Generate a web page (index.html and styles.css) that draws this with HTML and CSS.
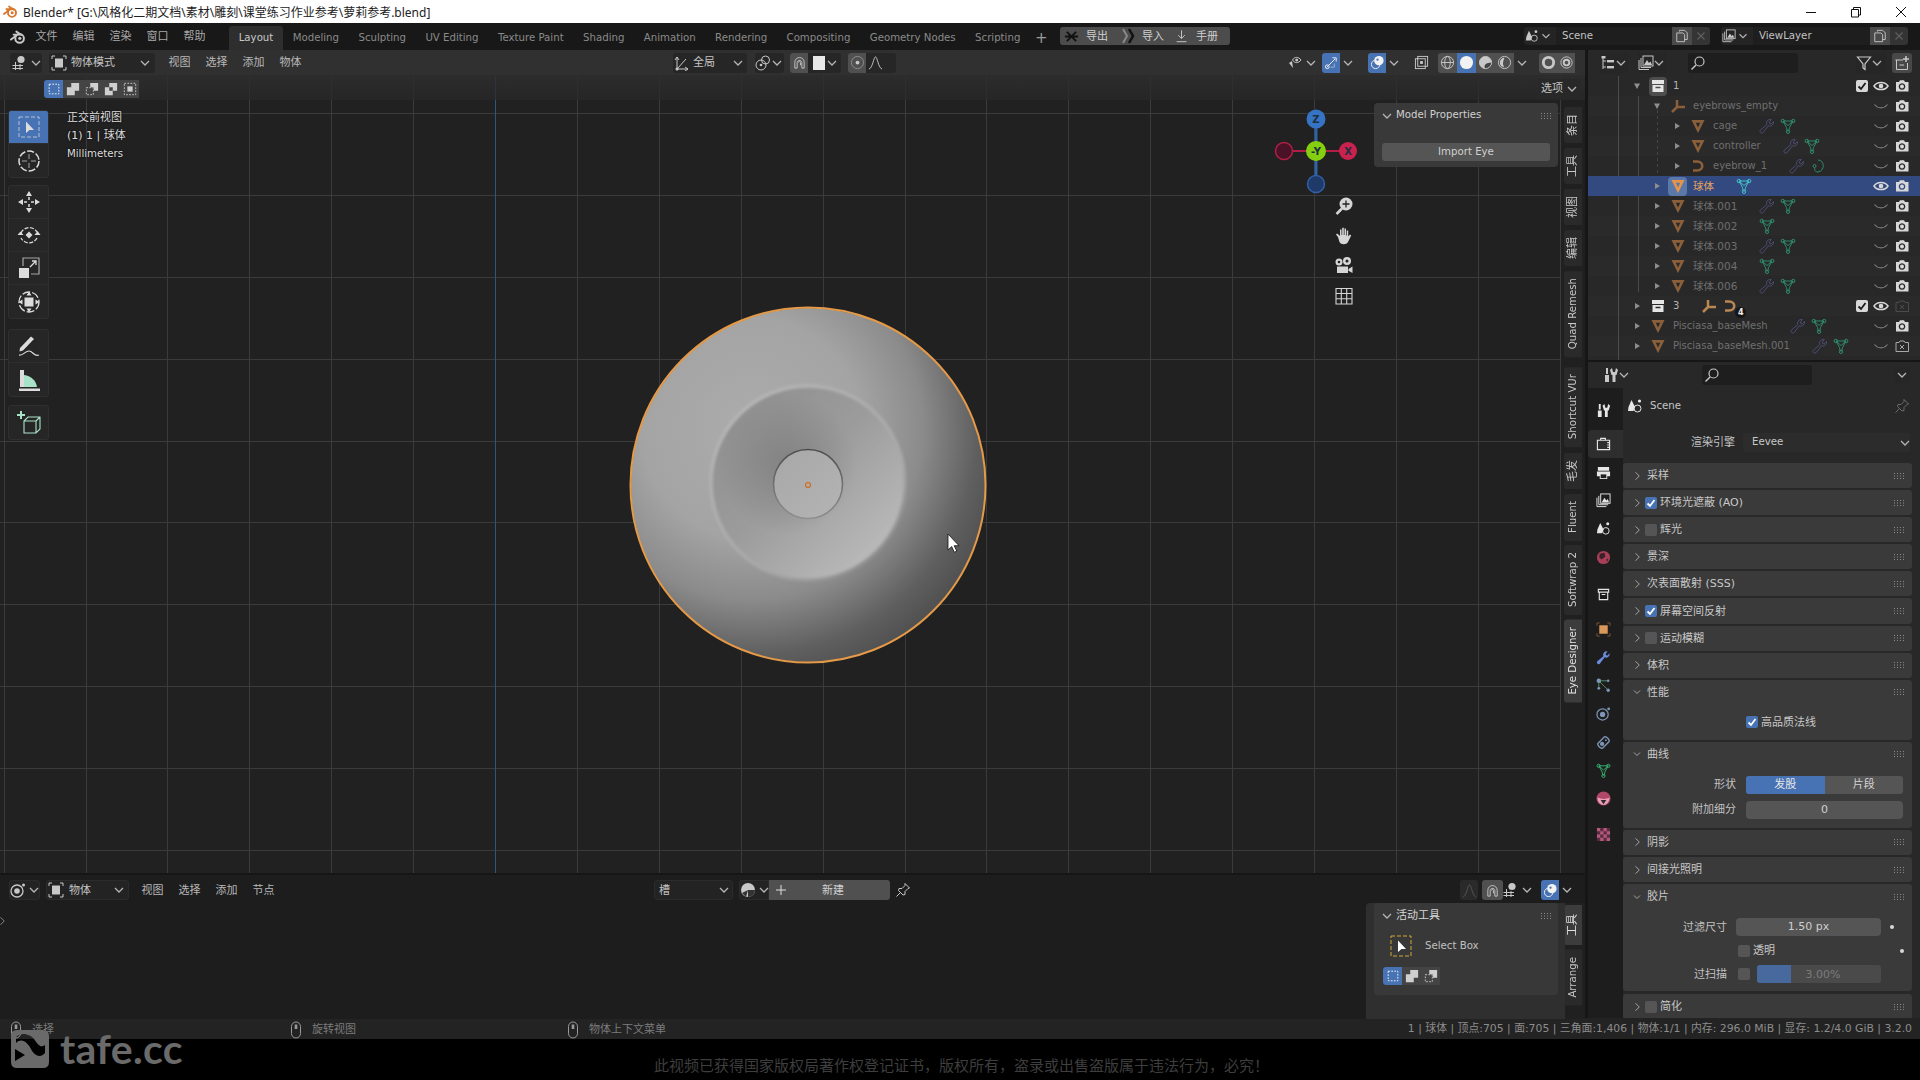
FILE: index.html
```html
<!DOCTYPE html>
<html lang="zh-CN">
<head>
<meta charset="utf-8">
<title>Blender</title>
<link rel="stylesheet" href="styles.css">
</head>
<body>
<svg class="defs" xmlns="http://www.w3.org/2000/svg">
  <symbol id="logo" viewBox="0 0 16 16"><circle cx="9.6" cy="9.4" r="4.3" fill="none" stroke="currentColor" stroke-width="2"/><circle cx="9.8" cy="9.3" r="1.6" fill="currentColor"/><path d="M1 10.6 6.6 6.3M3.6 5.6H9.6M6.4 2.6 11.4 6" fill="none" stroke="currentColor" stroke-width="1.9" stroke-linecap="round"/></symbol>
  <symbol id="view3d" viewBox="0 0 16 16"><path d="M0.5 10.5H11M3.5 7V15M8 9V15M0.5 13.5H11" stroke="currentColor" fill="none"/><circle cx="9" cy="4.5" r="3.6" fill="currentColor"/></symbol>
  <symbol id="modebox" viewBox="0 0 16 16"><path d="M1 4V1H4M12 1H15V4M15 12V15H12M4 15H1V12" stroke="currentColor" fill="none"/><rect x="4" y="3.5" width="8" height="9" fill="currentColor"/></symbol>
  <symbol id="chevd" viewBox="0 0 16 16"><path d="M4 6 8 10 12 6" fill="none" stroke="currentColor" stroke-width="1.3"/></symbol>
  <symbol id="chevr" viewBox="0 0 16 16"><path d="M6 3 11 8 6 13" fill="none" stroke="currentColor" stroke-width="1.3"/></symbol>
  <symbol id="trir" viewBox="0 0 10 10"><path d="M3 2 8 5 3 8Z" fill="currentColor"/></symbol>
  <symbol id="trid" viewBox="0 0 10 10"><path d="M2 2.500H8L5 8Z" fill="currentColor"/></symbol>
  <symbol id="grip" viewBox="0 0 12 6"><g fill="currentColor"><rect x="0" y="0" width="1" height="1"/><rect x="3" y="0" width="1" height="1"/><rect x="6" y="0" width="1" height="1"/><rect x="9" y="0" width="1" height="1"/><rect x="0" y="2.500" width="1" height="1"/><rect x="3" y="2.500" width="1" height="1"/><rect x="6" y="2.500" width="1" height="1"/><rect x="9" y="2.500" width="1" height="1"/><rect x="0" y="5" width="1" height="1"/><rect x="3" y="5" width="1" height="1"/><rect x="6" y="5" width="1" height="1"/><rect x="9" y="5" width="1" height="1"/></g></symbol>
  <symbol id="check" viewBox="0 0 12 12"><path d="M2.500 6.500 5 9 9.500 3" fill="none" stroke="currentColor" stroke-width="1.800"/></symbol>
  <symbol id="obj" viewBox="0 0 16 16"><path fill-rule="evenodd" d="M1.500 2H14.500L8 15ZM5.800 4.800 8 9.500 10.200 4.800Z" fill="currentColor"/></symbol>
  <symbol id="mesh" viewBox="0 0 16 16"><path d="M3 3H13L9.500 9.500 8.800 13H7.200L6.500 9.500ZM3 3 8 7.500 13 3" fill="none" stroke="currentColor"/><circle cx="2.800" cy="3" r="1.700" fill="none" stroke="currentColor"/><circle cx="13.200" cy="3" r="1.700" fill="none" stroke="currentColor"/><circle cx="8" cy="13.800" r="1.700" fill="none" stroke="currentColor"/></symbol>
  <symbol id="wrench" viewBox="0 0 16 16"><path d="M14.500 3.500a3.800 3.800 0 0 1-5.200 4.300L4.200 14.500a1.800 1.800 0 0 1-2.800-2.400l6.400-5.500A3.800 3.800 0 0 1 12.300 1.500L10.300 4l.4 1.500 1.500.4Z" fill="currentColor"/></symbol>
  <symbol id="wrenchl" viewBox="0 0 16 16"><path d="M14.500 3.500a3.800 3.800 0 0 1-5.200 4.300L4.200 14.500a1.800 1.800 0 0 1-2.800-2.400l6.400-5.500A3.800 3.800 0 0 1 12.300 1.500L10.300 4l.4 1.500 1.500.4Z" fill="none" stroke="currentColor"/></symbol>
  <symbol id="curve" viewBox="0 0 16 16"><path d="M3 3.500H7C14 3.500 14 12.500 7 12.500H3" fill="none" stroke="currentColor" stroke-width="2.600"/></symbol>
  <symbol id="curvel" viewBox="0 0 16 16"><path d="M8 2C15 2 15 13 8 14 5 14 4 12 5 10" fill="none" stroke="currentColor"/><circle cx="4.500" cy="8" r="1.500" fill="none" stroke="currentColor"/></symbol>
  <symbol id="empty" viewBox="0 0 16 16"><path d="M7 2V9M7 9 2 14M7 9H15" fill="none" stroke="currentColor" stroke-width="2.500"/></symbol>
  <symbol id="coll" viewBox="0 0 16 16"><path fill-rule="evenodd" d="M2 2H14V6H2ZM2.500 7H13.500V14H2.500ZM5.500 8.700V10.200H10.500V8.700Z" fill="currentColor"/></symbol>
  <symbol id="colll" viewBox="0 0 16 16"><path d="M2.500 2.500H13.500V5.500H2.500ZM3.500 5.500V13.500H12.500V5.500M6 8H10" fill="none" stroke="currentColor" stroke-width="1.200"/></symbol>
  <symbol id="eye" viewBox="0 0 16 16"><path d="M1 8C4 3.300 12 3.300 15 8 12 12.700 4 12.700 1 8Z" fill="none" stroke="currentColor" stroke-width="1.500"/><circle cx="8" cy="8" r="2.300" fill="currentColor"/></symbol>
  <symbol id="eyeoff" viewBox="0 0 16 16"><path d="M1.500 6.500C5 11 11 11 14.500 6.500" fill="none" stroke="currentColor" stroke-width="1.100"/></symbol>
  <symbol id="cam" viewBox="0 0 16 16"><path fill-rule="evenodd" d="M2 4H5L6 2.300H10L11 4H14.500V13.500H2ZM8 5.200a3.300 3.300 0 1 0 .01 0Z" fill="currentColor"/><circle cx="8" cy="8.500" r="2" fill="currentColor"/></symbol>
  <symbol id="camoff" viewBox="0 0 16 16"><path d="M2 4.500H5L6 3H10L11 4.500H14.500V13.500H2ZM6 7 10 11M10 7 6 11" fill="none" stroke="currentColor"/></symbol>
  <symbol id="outl" viewBox="0 0 16 16"><path d="M3 2V14M3 6H6M3 12H6" stroke="currentColor" fill="none"/><rect x="1.500" y="1" width="4" height="2.500" fill="currentColor"/><rect x="7" y="5" width="7" height="2.400" fill="currentColor"/><rect x="7" y="11" width="7" height="2.400" fill="currentColor"/></symbol>
  <symbol id="layer" viewBox="0 0 16 16"><path d="M1 5V14.500H11M3 3V12.500H13" fill="none" stroke="currentColor"/><rect x="5" y="1" width="10" height="10" fill="none" stroke="currentColor"/><path d="M6 10 9 5 11 8 12.500 6.500 14 10Z" fill="currentColor"/></symbol>
  <symbol id="search" viewBox="0 0 16 16"><circle cx="9.500" cy="6.500" r="4.500" fill="none" stroke="currentColor" stroke-width="1.200"/><path d="M6 10 1.500 14.500" stroke="currentColor" stroke-width="1.400"/></symbol>
  <symbol id="filter" viewBox="0 0 16 16"><path d="M1.500 2H14.500L9 9V14.500L7 13V9Z" fill="none" stroke="currentColor" stroke-width="1.200"/></symbol>
  <symbol id="newcoll" viewBox="0 0 16 16"><path d="M1.500 5H9M2.500 5V14.500H13.500V8M5.500 10H10" fill="none" stroke="currentColor"/><path d="M12 1V7M9 4H15" stroke="currentColor" stroke-width="1.500"/></symbol>
  <symbol id="scene" viewBox="0 0 16 16"><path d="M4.500 2 8 9 6.500 13H1L1.500 9Z" fill="currentColor"/><circle cx="10.500" cy="10.500" r="3.500" fill="none" stroke="currentColor"/><circle cx="12.500" cy="3" r="1.600" fill="currentColor"/></symbol>
  <symbol id="copy" viewBox="0 0 16 16"><path d="M5 3V1.500H11L14 4.500V12H11M2 4.500H9L11 6.500V14.500H2Z" fill="none" stroke="currentColor"/></symbol>
  <symbol id="xx" viewBox="0 0 16 16"><path d="M4 4 12 12M12 4 4 12" stroke="currentColor" stroke-width="1.400"/></symbol>
  <symbol id="pin" viewBox="0 0 16 16"><path d="M10 1.500 14.500 6 13 6.500 10 9.500V12.500L8 13 3.500 8.500 4 6.500H7L10 3.500ZM5.500 10.500 1.500 14.500" fill="none" stroke="currentColor"/></symbol>
  <symbol id="visib" viewBox="0 0 16 16"><path d="M2 8 6 13 5 6Z" fill="currentColor"/><path d="M5.500 5C7.500 1.500 11.500 1.500 14 5 11.500 8.500 7.500 8.500 5.500 5Z" fill="none" stroke="currentColor"/><circle cx="9.700" cy="5" r="1.500" fill="currentColor"/></symbol>
  <symbol id="gizmo" viewBox="0 0 16 16"><path d="M3 13 12 4M9 3H13V7" fill="none" stroke="currentColor"/><circle cx="3.500" cy="12.500" r="2" fill="none" stroke="currentColor"/><path d="M7 13H11V9" fill="none" stroke="currentColor" opacity=".5"/></symbol>
  <symbol id="overlay" viewBox="0 0 16 16"><circle cx="6" cy="10" r="4.500" fill="none" stroke="currentColor"/><circle cx="9.500" cy="6" r="5" fill="currentColor"/><circle cx="8" cy="5" r="1.200" fill="#4772b3"/></symbol>
  <symbol id="xray" viewBox="0 0 16 16"><rect x="4" y="1.500" width="10.500" height="10.500" fill="none" stroke="currentColor"/><rect x="1.500" y="4" width="10.500" height="10.500" fill="none" stroke="currentColor"/><rect x="6.500" y="6.500" width="3" height="3" fill="currentColor"/></symbol>
  <symbol id="swire" viewBox="0 0 16 16"><circle cx="8" cy="8" r="6.500" fill="none" stroke="currentColor"/><ellipse cx="8" cy="8" rx="3" ry="6.500" fill="none" stroke="currentColor"/><path d="M1.500 8H14.500" stroke="currentColor"/></symbol>
  <symbol id="ssolid" viewBox="0 0 16 16"><circle cx="8" cy="8" r="7" fill="currentColor"/></symbol>
  <symbol id="smat" viewBox="0 0 16 16"><circle cx="8" cy="8" r="6.500" fill="#444" stroke="currentColor"/><path d="M8 1.500A6.500 6.500 0 0 0 8 14.500C5 11 9 8 14.500 8A6.500 6.500 0 0 0 8 1.500Z" fill="currentColor"/></symbol>
  <symbol id="srend" viewBox="0 0 16 16"><circle cx="8" cy="8" r="6.500" fill="none" stroke="currentColor"/><path d="M8 3A5 5 0 0 0 3 8C3 11 5 13 8 13 5 10 7 6 8 3Z" fill="currentColor"/></symbol>
  <symbol id="ring" viewBox="0 0 16 16"><circle cx="8" cy="8" r="5.500" fill="none" stroke="currentColor" stroke-width="3"/></symbol>
  <symbol id="ring2" viewBox="0 0 16 16"><circle cx="8" cy="8" r="6" fill="none" stroke="currentColor"/><circle cx="8" cy="8" r="3" fill="none" stroke="currentColor" stroke-width="2"/></symbol>
  <symbol id="transf" viewBox="0 0 16 16"><path d="M3 14V2M3 2 1 5M3 2 5 5M3 14H14M14 14 11 12M14 14 11 16M3 14 12 4" fill="none" stroke="currentColor"/><circle cx="3" cy="14" r="1.500" fill="currentColor"/></symbol>
  <symbol id="pivot" viewBox="0 0 16 16"><circle cx="6" cy="10" r="5" fill="none" stroke="currentColor"/><circle cx="10.500" cy="5" r="4" fill="none" stroke="currentColor"/><circle cx="6" cy="10" r="1.300" fill="currentColor"/></symbol>
  <symbol id="snap" viewBox="0 0 16 16"><path d="M3 8C3 1 13 1 13 8V14H10.500V8C10.500 5 5.500 5 5.500 8V14H3Z M7 8C7 6 9 6 9 8V11" fill="none" stroke="currentColor"/></symbol>
  <symbol id="propo" viewBox="0 0 16 16"><circle cx="8" cy="8" r="6.500" fill="none" stroke="currentColor" opacity=".5"/><circle cx="8" cy="8" r="2" fill="currentColor"/></symbol>
  <symbol id="falloff" viewBox="0 0 16 16"><path d="M1 15C5 14 6 2 8 2 10 2 11 14 15 15" fill="none" stroke="currentColor"/></symbol>
  <symbol id="sel1" viewBox="0 0 16 16"><rect x="2.500" y="2.500" width="11" height="11" fill="none" stroke="#fff" stroke-dasharray="2 1.500"/></symbol>
  <symbol id="sel2" viewBox="0 0 16 16"><path d="M6 1H15V10H10V15H1V6H6Z" fill="currentColor"/></symbol>
  <symbol id="sel3" viewBox="0 0 16 16"><path d="M6 1H15V10H10V6H6Z" fill="currentColor"/><rect x="1.500" y="6.500" width="8" height="8" fill="none" stroke="currentColor" stroke-dasharray="2 1.500"/></symbol>
  <symbol id="sel4" viewBox="0 0 16 16"><path fill-rule="evenodd" d="M6 1H15V10H10V6H6ZM1 6H10V15H1ZM6 10V6H10V10Z" fill="currentColor"/></symbol>
  <symbol id="sel5" viewBox="0 0 16 16"><rect x="1.500" y="1.500" width="13" height="13" fill="none" stroke="currentColor" stroke-dasharray="2 1.500"/><rect x="5" y="5" width="6" height="6" fill="currentColor"/></symbol>
  <symbol id="t-select" viewBox="0 0 24 24"><rect x="2" y="2" width="20" height="20" fill="none" stroke="currentColor" stroke-opacity=".75" stroke-dasharray="4 2"/><path d="M9 6.500V18L12.500 15H17Z" fill="currentColor"/></symbol>
  <symbol id="t-cursor" viewBox="0 0 24 24"><circle cx="12" cy="12" r="10" fill="none" stroke="currentColor" stroke-width="1.500" stroke-dasharray="7 2"/><path d="M12 5V10M12 14V19M5 12H10M14 12H19" stroke="currentColor" stroke-opacity=".7"/></symbol>
  <symbol id="t-move" viewBox="0 0 24 24"><path d="M12 1 15 6H9ZM12 23 9 18H15ZM1 12 6 9V15ZM23 12 18 15V9Z" fill="currentColor"/><path d="M12 7V10M12 14V17M7 12H10M14 12H17" stroke="currentColor" stroke-width="1.500"/></symbol>
  <symbol id="t-rotate" viewBox="0 0 24 24"><path d="M4 10A9 9 0 0 1 20 9M20 15A9 9 0 0 1 4 15" fill="none" stroke="currentColor" stroke-width="1.300" stroke-dasharray="4 1.500"/><path d="M12 8.500 15.500 12 12 15.500 8.500 12ZM0.500 12 6.500 12 3.500 8.500ZM17.500 12H23.500L20.500 8Z" fill="currentColor"/></symbol>
  <symbol id="t-scale" viewBox="0 0 24 24"><path d="M6 10V2H22V18H14" fill="none" stroke="currentColor" stroke-opacity=".7" stroke-width="1.200"/><rect x="2" y="12" width="10" height="10" fill="currentColor"/><path d="M13 11 19 5M15 5H19V9" fill="none" stroke="currentColor" stroke-width="1.300"/></symbol>
  <symbol id="t-trans" viewBox="0 0 24 24"><circle cx="12" cy="12" r="10" fill="none" stroke="currentColor" stroke-width="1.300" stroke-dasharray="8 2"/><rect x="7.500" y="7.500" width="9" height="9" fill="currentColor"/><path d="M12 1.500 14.500 5.500H9.500ZM12 22.500 9.500 18.500H14.500ZM1.500 12 5.500 9.500V14.500ZM22.500 12 18.500 14.500V9.500Z" fill="currentColor"/></symbol>
  <symbol id="t-annot" viewBox="0 0 24 24"><path d="M3 14 14 2.500 17 5 6 16.500 2.500 17.500Z" fill="currentColor"/><path d="M2 21C6 22 8 17 12 17S17 23 22 21" fill="none" stroke="currentColor" stroke-width="1.200"/></symbol>
  <symbol id="t-meas" viewBox="0 0 24 24"><path d="M3 2H7V19H3Z" fill="currentColor"/><path d="M7 7C15 8 19 13 20 19H7Z" fill="#a8e2c8"/><path d="M2 20.500H23V23H2Z" fill="currentColor"/></symbol>
  <symbol id="t-cube" viewBox="0 0 24 24"><path d="M7 10 11 6H23V18L19 22H7ZM7 10H19V22M19 10 23 6" fill="none" stroke="#a8e2c8" stroke-width="1.100"/><path d="M4 0V8M0 4H8" stroke="#a8e2c8" stroke-width="2"/></symbol>
  <symbol id="n-zoom" viewBox="0 0 20 20"><circle cx="12" cy="8" r="6.500" fill="currentColor"/><path d="M12 4.500V11.500M8.500 8H15.500" stroke="#222" stroke-width="1.300"/><path d="M8 12.500 2.500 18" stroke="currentColor" stroke-width="2.500"/></symbol>
  <symbol id="n-hand" viewBox="0 0 20 20"><path d="M4 11 2 8.500 3.200 7.500 6 10V3.500H7.500V9H8.200V1.800H9.800V9H10.500V2.500H12V9.500H12.700V4.500H14.200V10.500L16 8.500 17.200 9.500 14 16C12.500 19 7 19 5.500 16Z" fill="currentColor"/></symbol>
  <symbol id="n-cam" viewBox="0 0 20 20"><circle cx="5" cy="6" r="3.500" fill="currentColor"/><circle cx="13" cy="5" r="4" fill="currentColor"/><circle cx="5" cy="6" r="1.300" fill="#222"/><circle cx="13" cy="5" r="1.500" fill="#222"/><path d="M3 10.500H14V17H3ZM14.500 13 18.500 10.500V17L14.500 14.800Z" fill="currentColor"/></symbol>
  <symbol id="n-grid" viewBox="0 0 20 20"><path d="M2 2.500H18V18H2ZM2 7.500H18M2 12.800H18M7.300 2.500V18M12.700 2.500V18" fill="none" stroke="currentColor" stroke-width="1.100"/></symbol>
  <symbol id="mouse" viewBox="0 0 12 18"><rect x="1.500" y="1" width="9" height="16" rx="4.500" fill="none" stroke="currentColor"/><rect x="4.700" y="3.500" width="2.600" height="4.500" fill="currentColor"/></symbol>
  <symbol id="mat" viewBox="0 0 16 16"><circle cx="8" cy="8" r="7" fill="currentColor"/><path d="M8 8H15A7 7 0 0 1 8 15Z" fill="#333"/><path d="M2 11 8 8 6 15Z" fill="#333"/></symbol>
  <symbol id="world" viewBox="0 0 16 16"><circle cx="8" cy="8" r="7" fill="currentColor"/><path d="M4 4 9 3 10 7 6 10 3.500 8ZM11 10 13 9 12 13Z" fill="#3a2028"/></symbol>
  <symbol id="matball" viewBox="0 0 16 16"><circle cx="8" cy="8" r="7.500" fill="currentColor"/><path d="M1.500 7C6 9 11 9 14.500 7 14 12 11 15 8 15 5 15 2 12 1.500 7Z" fill="#e8a0b8"/><path d="M5 9.500 11 9.500 8 14Z" fill="#2a2a2a"/></symbol>
  <symbol id="tex" viewBox="0 0 16 16"><rect x="1" y="1" width="14" height="14" fill="#5a2b40"/><path d="M1 1H4.500V4.500H1ZM8 1H11.500V4.500H8ZM4.500 4.500H8V8H4.500ZM11.500 4.500H15V8H11.500ZM1 8H4.500V11.500H1ZM8 8H11.500V11.500H8ZM4.500 11.500H8V15H4.500ZM11.500 11.500H15V15H11.500Z" fill="currentColor"/></symbol>
  <symbol id="objsq" viewBox="0 0 16 16"><path d="M1 4V1H4M12 1H15V4M15 12V15H12M4 15H1V12" stroke="#7a5638" fill="none"/><rect x="3.500" y="3.500" width="9" height="9" fill="currentColor"/></symbol>
  <symbol id="tools" viewBox="0 0 16 16"><path d="M3 1H5V7H3ZM2 8H6V15H2Z" fill="currentColor"/><path d="M9 1 10 5H12L13 1 15 3 13.500 8H12.500V15H9.500V8H8.500L7 3Z" fill="currentColor"/></symbol>
  <symbol id="render" viewBox="0 0 16 16"><path d="M5 3V1.500H10V3M1.500 3.500H14.500V13.500H1.500Z" fill="none" stroke="currentColor" stroke-width="1.200"/><path d="M12 6H14M12 8.500H14M12 11H14" stroke="currentColor" stroke-width="1.200"/></symbol>
  <symbol id="output" viewBox="0 0 16 16"><path d="M2 2H14V6H2ZM1 7H15V12H12V15H4V12H1Z" fill="currentColor"/><path d="M5 10H11V14H5Z" fill="#222"/></symbol>
  <symbol id="partic" viewBox="0 0 16 16"><path d="M3 3 13 3M3 3 3 10M3 3 13 13" fill="none" stroke="#8fa" stroke-opacity=".5"/><circle cx="3" cy="3" r="2.400" fill="currentColor"/><circle cx="13" cy="3" r="1.300" fill="currentColor"/><circle cx="3" cy="11" r="1.500" fill="currentColor"/><circle cx="13" cy="13" r="1.800" fill="currentColor"/></symbol>
  <symbol id="phys" viewBox="0 0 16 16"><circle cx="7" cy="9" r="6" fill="none" stroke="currentColor" stroke-width="1.300"/><circle cx="7" cy="9" r="2.800" fill="currentColor"/><circle cx="13.500" cy="3" r="1.500" fill="currentColor"/></symbol>
  <symbol id="constr" viewBox="0 0 16 16"><path d="M2 9 9 2C11 1 15 5 14 7L7 14C5 15 1 11 2 9Z" fill="none" stroke="currentColor" stroke-width="1.500"/><circle cx="6.500" cy="9.500" r="2.300" fill="currentColor"/><circle cx="10.500" cy="5.500" r="1" fill="currentColor"/></symbol>
  <symbol id="box-sel" viewBox="0 0 24 24"><rect x="2" y="2" width="20" height="20" fill="none" stroke="#d2a63a" stroke-dasharray="4 2"/><path d="M9 6.500V18L12.500 15H17Z" fill="#fff"/></symbol>
</svg>

<div class="titlebar">
  <svg class="i t-logo"><use href="#logo"/></svg>
  <span class="t-text">Blender* [G:\风格化二期文档\素材\雕刻\课堂练习作业参考\萝莉参考.blend]</span>
  <div class="winbtns">
    <svg class="wb" viewBox="0 0 12 12"><path d="M1 6.500H11" stroke="#111"/></svg>
    <svg class="wb" viewBox="0 0 12 12"><path d="M1.500 3.500H8.500V11H1.500ZM3.500 3.500V1.500H10.500V9H8.500" fill="none" stroke="#111"/></svg>
    <svg class="wb" viewBox="0 0 12 12"><path d="M1 1 11 11M11 1 1 11" stroke="#111"/></svg>
  </div>
</div>

<div class="topbar">
  <div class="logo-box"><svg class="i"><use href="#logo"/></svg></div>
  <span class="mi">文件</span><span class="mi">编辑</span><span class="mi">渲染</span><span class="mi">窗口</span><span class="mi">帮助</span>
  <div class="wtabs">
    <span class="wt on">Layout</span><span class="wt">Modeling</span><span class="wt">Sculpting</span><span class="wt">UV Editing</span><span class="wt">Texture Paint</span><span class="wt">Shading</span><span class="wt">Animation</span><span class="wt">Rendering</span><span class="wt">Compositing</span><span class="wt">Geometry Nodes</span><span class="wt">Scripting</span><span class="wt plus">+</span>
  </div>
  <div class="pill">
    <svg class="i pi1" viewBox="0 0 16 16"><path d="M3 3 13 13M13 3 3 13M1 8H15" stroke="#111" stroke-width="2"/></svg><span class="pt1">导出</span>
    <span class="pchev"><svg class="i" viewBox="0 0 16 16"><path d="M3 1 7 8 3 15" fill="none" stroke="#888" stroke-width="2"/><path d="M9 1 13 8 9 15" fill="none" stroke="#111" stroke-width="2.500"/></svg></span><span class="pt2">导入</span>
    <svg class="i pi3" viewBox="0 0 16 16"><path d="M8 1V11M4 7 8 11 12 7M2 15H14" fill="none" stroke="#ddd"/></svg><span class="pt3">手册</span>
  </div>
  <div class="scenes">
    <div class="sc-icon"><svg class="i"><use href="#scene"/></svg><svg class="i chev"><use href="#chevd"/></svg></div>
    <div class="sc-name s1">Scene</div>
    <div class="sc-btn"><svg class="i"><use href="#copy"/></svg></div>
    <div class="sc-x"><svg class="i"><use href="#xx"/></svg></div>
    <div class="sc-icon s2"><svg class="i"><use href="#layer"/></svg><svg class="i chev"><use href="#chevd"/></svg></div>
    <div class="sc-name s3">ViewLayer</div>
    <div class="sc-btn"><svg class="i"><use href="#copy"/></svg></div>
    <div class="sc-x"><svg class="i"><use href="#xx"/></svg></div>
  </div>
</div>

<div class="work">
  <div class="left">
    <div class="viewport">
      <svg class="grid" width="1585" height="823"><path class="gl" d="M4.500 0V823M86.500 0V823M167.500 0V823M249.500 0V823M331.500 0V823M413.500 0V823M577.500 0V823M659.500 0V823M741.500 0V823M823.500 0V823M905.500 0V823M986.500 0V823M1068.500 0V823M1150.500 0V823M1232.500 0V823M1314.500 0V823M1396.500 0V823M1478.500 0V823M1560.500 0V823M0 63.500H1585M0 145.500H1585M0 227.500H1585M0 309.500H1585M0 391.500H1585M0 472.500H1585M0 554.500H1585M0 636.500H1585M0 718.500H1585M0 800.500H1585"/><path class="gb" d="M495.500 0V823"/></svg>
      <div class="vh1">
        <div class="box b-ed"><svg class="i"><use href="#view3d"/></svg><svg class="i chev"><use href="#chevd"/></svg></div>
        <div class="box b-mode"><svg class="i"><use href="#modebox"/></svg><span>物体模式</span><svg class="i chev end"><use href="#chevd"/></svg></div>
        <span class="vm first">视图</span><span class="vm">选择</span><span class="vm">添加</span><span class="vm">物体</span>
        <div class="box b-glob"><svg class="i"><use href="#transf"/></svg><span>全局</span><svg class="i chev end"><use href="#chevd"/></svg></div>
        <div class="box b-piv"><svg class="i"><use href="#pivot"/></svg><svg class="i chev"><use href="#chevd"/></svg></div>
        <div class="box b-snap"><span class="bt lit"><svg class="i"><use href="#snap"/></svg></span><span class="whsq"></span><svg class="i chev"><use href="#chevd"/></svg></div>
        <div class="box b-prop"><span class="bt lit"><svg class="i"><use href="#propo"/></svg></span><span class="bt"><svg class="i"><use href="#falloff"/></svg></span></div>
        <div class="b-vis"><svg class="i"><use href="#visib"/></svg><svg class="i chev"><use href="#chevd"/></svg></div>
        <span class="bt blue b-giz"><svg class="i"><use href="#gizmo"/></svg></span><svg class="i chev"><use href="#chevd"/></svg>
        <span class="bt blue b-ov"><svg class="i"><use href="#overlay"/></svg></span><svg class="i chev"><use href="#chevd"/></svg>
        <span class="bt b-xr"><svg class="i"><use href="#xray"/></svg></span>
        <div class="shad"><span class="bt lit"><svg class="i"><use href="#swire"/></svg></span><span class="bt blue"><svg class="i"><use href="#ssolid"/></svg></span><span class="bt lit"><svg class="i"><use href="#smat"/></svg></span><span class="bt lit"><svg class="i"><use href="#srend"/></svg></span></div>
        <svg class="i chev"><use href="#chevd"/></svg>
        <div class="b-ren"><span class="bt lit"><svg class="i"><use href="#ring"/></svg></span><span class="bt lit"><svg class="i"><use href="#ring2"/></svg></span></div>
      </div>
      <div class="vh2">
        <div class="selmodes">
          <span class="sm blue"><svg class="i"><use href="#sel1"/></svg></span><span class="sm"><svg class="i"><use href="#sel2"/></svg></span><span class="sm"><svg class="i"><use href="#sel3"/></svg></span><span class="sm"><svg class="i"><use href="#sel4"/></svg></span><span class="sm"><svg class="i"><use href="#sel5"/></svg></span>
        </div>
        <div class="opts"><span>选项</span><svg class="i chev"><use href="#chevd"/></svg></div>
      </div>

      <div class="toolbar">
        <div class="tg"><div class="tool on"><svg class="ti"><use href="#t-select"/></svg></div><div class="tool"><svg class="ti"><use href="#t-cursor"/></svg></div></div>
        <div class="tg"><div class="tool"><svg class="ti"><use href="#t-move"/></svg></div><div class="tool"><svg class="ti"><use href="#t-rotate"/></svg></div><div class="tool"><svg class="ti"><use href="#t-scale"/></svg></div><div class="tool"><svg class="ti"><use href="#t-trans"/></svg></div></div>
        <div class="tg"><div class="tool"><svg class="ti"><use href="#t-annot"/></svg></div><div class="tool"><svg class="ti"><use href="#t-meas"/></svg></div></div>
        <div class="tg"><div class="tool"><svg class="ti"><use href="#t-cube"/></svg></div></div>
      </div>
      <div class="info"><div>正交前视图</div><div>(1) 1 | 球体</div><div class="en">Millimeters</div></div>

      <svg class="sphere" viewBox="0 0 362 362">
        <defs>
          <radialGradient id="gOuter" gradientUnits="userSpaceOnUse" cx="125" cy="125" r="275">
            <stop offset="0" stop-color="#acacac"/><stop offset=".4" stop-color="#a4a4a4"/><stop offset=".62" stop-color="#8b8b8b"/><stop offset=".82" stop-color="#5f5f5f"/><stop offset="1" stop-color="#474747"/>
          </radialGradient>
          <linearGradient id="gInner" gradientUnits="userSpaceOnUse" x1="100" y1="100" x2="255" y2="260">
            <stop offset="0" stop-color="#8f8f8f"/><stop offset=".45" stop-color="#9b9b9b"/><stop offset="1" stop-color="#bcbcbc"/>
          </linearGradient>
          <radialGradient id="gDark" gradientUnits="userSpaceOnUse" cx="160" cy="160" r="70">
            <stop offset="0" stop-color="#707070" stop-opacity=".55"/><stop offset="1" stop-color="#707070" stop-opacity="0"/>
          </radialGradient>
          <linearGradient id="gRim" gradientUnits="userSpaceOnUse" x1="100" y1="90" x2="250" y2="270">
            <stop offset="0" stop-color="#bababa"/><stop offset=".7" stop-color="#a8a8a8"/><stop offset="1" stop-color="#8a8a8a"/>
          </linearGradient>
          <linearGradient id="gSmallRim" gradientUnits="userSpaceOnUse" x1="181" y1="145" x2="181" y2="215">
            <stop offset="0" stop-color="#4d4d4d"/><stop offset="1" stop-color="#8f8f8f"/>
          </linearGradient>
          <linearGradient id="gSmall" gradientUnits="userSpaceOnUse" x1="150" y1="150" x2="215" y2="215">
            <stop offset="0" stop-color="#a8a8a8"/><stop offset="1" stop-color="#b4b4b4"/>
          </linearGradient>
          <filter id="soft" x="-10%" y="-10%" width="120%" height="120%"><feGaussianBlur stdDeviation="1.800"/></filter>
        </defs>
        <circle cx="181" cy="181" r="177" fill="url(#gOuter)"/>
        <circle cx="181" cy="179" r="97" fill="url(#gInner)" stroke="url(#gRim)" stroke-width="3" filter="url(#soft)"/>
        <circle cx="181" cy="179" r="95" fill="url(#gDark)"/>
        <circle cx="181" cy="180" r="34.500" fill="url(#gSmall)" stroke="url(#gSmallRim)" stroke-width="1.500"/>
        <circle cx="181" cy="181" r="177.500" fill="none" stroke="#e49a48" stroke-width="2"/>
        <circle cx="181" cy="181" r="2.500" fill="#b8a796" stroke="#c9702a" stroke-width="1.200"/>
      </svg>
      <svg class="pointer" viewBox="0 0 13 20"><path d="M1 1V17L4.700 13.600 7.300 19.200 9.800 18.100 7.200 12.700H12Z" fill="#fff" stroke="#111" stroke-width=".8"/></svg>

      <svg class="gizm" viewBox="0 0 84 96">
        <path d="M42 16V80" stroke="#2f62a8" stroke-width="3"/>
        <path d="M10 48H74" stroke="#b11f47" stroke-width="2"/>
        <circle cx="42" cy="16" r="9.500" fill="#3573c4"/>
        <circle cx="42" cy="81" r="8.500" fill="#1f3a68" stroke="#2f5fa8" stroke-width="1.500"/>
        <circle cx="10" cy="48" r="8.500" fill="#4a1226" stroke="#b11f47" stroke-width="1.500"/>
        <circle cx="74" cy="48" r="9" fill="#c9224f"/>
        <circle cx="42" cy="48" r="10" fill="#84cf0f"/>
        <text x="42" y="20" class="gt">Z</text><text x="74" y="52" class="gt">X</text><text x="42" y="52" class="gt">-Y</text>
      </svg>
      <div class="navs">
        <svg class="nv"><use href="#n-zoom"/></svg><svg class="nv"><use href="#n-hand"/></svg><svg class="nv"><use href="#n-cam"/></svg><svg class="nv"><use href="#n-grid"/></svg>
      </div>

      <div class="fpanel">
        <div class="fp-head"><svg class="i chev"><use href="#chevd"/></svg><span class="en">Model Properties</span><svg class="gripi"><use href="#grip"/></svg></div>
        <div class="fp-btn en">Import Eye</div>
      </div>

      <div class="vtabs">
        <span class="vt c">条目</span><span class="vt c">工具</span><span class="vt c">视图</span><span class="vt c">编辑</span><span class="vt">Quad Remesh</span><span class="vt gapb">Shortcut VUr</span><span class="vt c">毛发</span><span class="vt">Fluent</span><span class="vt">Softwrap 2</span><span class="vt on">Eye Designer</span>
      </div>
    </div>

    <div class="nodes">
      <div class="nh">
        <div class="box n-ed"><svg class="i"><use href="#phys"/></svg><svg class="i chev"><use href="#chevd"/></svg></div>
        <div class="box n-mode"><svg class="i"><use href="#modebox"/></svg><span>物体</span><svg class="i chev end"><use href="#chevd"/></svg></div>
        <span class="vm nfirst">视图</span><span class="vm">选择</span><span class="vm">添加</span><span class="vm">节点</span>
        <div class="box n-slot"><span>槽</span><svg class="i chev end"><use href="#chevd"/></svg></div>
        <div class="box n-mat"><svg class="i"><use href="#mat"/></svg><svg class="i chev"><use href="#chevd"/></svg></div>
        <div class="n-new"><svg class="i plusic" viewBox="0 0 16 16"><path d="M8 3V13M3 8H13" stroke="#ddd"/></svg><span>新建</span></div>
        <svg class="i n-pin"><use href="#pin"/></svg>
        <span class="bt n-a"><svg class="i"><use href="#falloff"/></svg></span>
        <span class="bt lit n-b"><svg class="i"><use href="#snap"/></svg></span>
        <svg class="i"><use href="#view3d"/></svg><svg class="i chev"><use href="#chevd"/></svg>
        <span class="bt blue n-c"><svg class="i"><use href="#overlay"/></svg></span><svg class="i chev"><use href="#chevd"/></svg>
      </div>
      <svg class="i n-arrow"><use href="#chevr"/></svg>
      <div class="side">
        <div class="side-in">
          <div class="fp-head s"><svg class="i chev"><use href="#chevd"/></svg><span>活动工具</span><svg class="gripi"><use href="#grip"/></svg></div>
          <div class="sb"><svg class="sbi"><use href="#box-sel"/></svg><span class="en">Select Box</span></div>
          <div class="selmodes s3m"><span class="sm blue"><svg class="i"><use href="#sel1"/></svg></span><span class="sm"><svg class="i"><use href="#sel2"/></svg></span><span class="sm"><svg class="i"><use href="#sel3"/></svg></span></div>
        </div>
      </div>
      <div class="vtabs low"><span class="vt c on">工具</span><span class="vt">Arrange</span></div>
    </div>
  </div>

  <div class="right">
    <div class="outliner">
      <div class="oh">
        <div class="oh-b b1"><svg class="i"><use href="#outl"/></svg><svg class="i chev"><use href="#chevd"/></svg></div>
        <div class="oh-b b2"><svg class="i"><use href="#layer"/></svg><svg class="i chev"><use href="#chevd"/></svg></div>
        <div class="oh-search"><svg class="i"><use href="#search"/></svg></div>
        <div class="oh-b b3"><svg class="i"><use href="#filter"/></svg><svg class="i chev"><use href="#chevd"/></svg></div>
        <div class="oh-new"><svg class="i"><use href="#newcoll"/></svg></div>
      </div>
      <span class="tree t1"></span><span class="tree t2"></span><span class="tree t3"></span>

      <div class="row l0"><svg class="tr"><use href="#trid"/></svg><span class="oi boxed"><svg class="i wh"><use href="#coll"/></svg></span><span class="nm br">1</span><div class="rr"><span class="ck"><svg><use href="#check"/></svg></span><svg class="i wh2"><use href="#eye"/></svg><svg class="i wh2"><use href="#cam"/></svg></div></div>
      <div class="row l1"><svg class="tr"><use href="#trid"/></svg><span class="oi"><svg class="i or"><use href="#empty"/></svg></span><span class="nm">eyebrows_empty</span><div class="rr"><svg class="i dim"><use href="#eyeoff"/></svg><svg class="i wh2"><use href="#cam"/></svg></div></div>
      <div class="row l2"><svg class="tr"><use href="#trir"/></svg><span class="oi"><svg class="i or"><use href="#obj"/></svg></span><span class="nm">cage</span><svg class="si w f"><use href="#wrenchl"/></svg><svg class="si g"><use href="#mesh"/></svg><div class="rr"><svg class="i dim"><use href="#eyeoff"/></svg><svg class="i wh2"><use href="#cam"/></svg></div></div>
      <div class="row l2"><svg class="tr"><use href="#trir"/></svg><span class="oi"><svg class="i or"><use href="#obj"/></svg></span><span class="nm">controller</span><svg class="si w f"><use href="#wrenchl"/></svg><svg class="si g"><use href="#mesh"/></svg><div class="rr"><svg class="i dim"><use href="#eyeoff"/></svg><svg class="i wh2"><use href="#cam"/></svg></div></div>
      <div class="row l2"><svg class="tr"><use href="#trir"/></svg><span class="oi"><svg class="i or"><use href="#curve"/></svg></span><span class="nm">eyebrow_1</span><svg class="si w f"><use href="#wrenchl"/></svg><svg class="si g"><use href="#curvel"/></svg><div class="rr"><svg class="i dim"><use href="#eyeoff"/></svg><svg class="i wh2"><use href="#cam"/></svg></div></div>
      <div class="row l1 sel"><svg class="tr"><use href="#trir"/></svg><span class="oi hi"><svg class="i or2"><use href="#obj"/></svg></span><span class="nm cj sl">球体</span><svg class="si cy f"><use href="#mesh"/></svg><div class="rr"><svg class="i wh2"><use href="#eye"/></svg><svg class="i wh2"><use href="#cam"/></svg></div></div>
      <div class="row l1"><svg class="tr"><use href="#trir"/></svg><span class="oi"><svg class="i or"><use href="#obj"/></svg></span><span class="nm cj">球体.001</span><svg class="si w f"><use href="#wrenchl"/></svg><svg class="si g"><use href="#mesh"/></svg><div class="rr"><svg class="i dim"><use href="#eyeoff"/></svg><svg class="i wh2"><use href="#cam"/></svg></div></div>
      <div class="row l1"><svg class="tr"><use href="#trir"/></svg><span class="oi"><svg class="i or"><use href="#obj"/></svg></span><span class="nm cj">球体.002</span><svg class="si g f"><use href="#mesh"/></svg><div class="rr"><svg class="i dim"><use href="#eyeoff"/></svg><svg class="i wh2"><use href="#cam"/></svg></div></div>
      <div class="row l1"><svg class="tr"><use href="#trir"/></svg><span class="oi"><svg class="i or"><use href="#obj"/></svg></span><span class="nm cj">球体.003</span><svg class="si w f"><use href="#wrenchl"/></svg><svg class="si g"><use href="#mesh"/></svg><div class="rr"><svg class="i dim"><use href="#eyeoff"/></svg><svg class="i wh2"><use href="#cam"/></svg></div></div>
      <div class="row l1"><svg class="tr"><use href="#trir"/></svg><span class="oi"><svg class="i or"><use href="#obj"/></svg></span><span class="nm cj">球体.004</span><svg class="si g f"><use href="#mesh"/></svg><div class="rr"><svg class="i dim"><use href="#eyeoff"/></svg><svg class="i wh2"><use href="#cam"/></svg></div></div>
      <div class="row l1"><svg class="tr"><use href="#trir"/></svg><span class="oi"><svg class="i or"><use href="#obj"/></svg></span><span class="nm cj">球体.006</span><svg class="si w f"><use href="#wrenchl"/></svg><svg class="si g"><use href="#mesh"/></svg><div class="rr"><svg class="i dim"><use href="#eyeoff"/></svg><svg class="i wh2"><use href="#cam"/></svg></div></div>
      <div class="row l0"><svg class="tr"><use href="#trir"/></svg><span class="oi"><svg class="i wh"><use href="#coll"/></svg></span><span class="nm br">3</span><svg class="si orl f2"><use href="#empty"/></svg><span class="badge"><svg class="si orl"><use href="#curve"/></svg><b>4</b></span><div class="rr"><span class="ck"><svg><use href="#check"/></svg></span><svg class="i wh2"><use href="#eye"/></svg><svg class="i dim2"><use href="#camoff"/></svg></div></div>
      <div class="row l0"><svg class="tr"><use href="#trir"/></svg><span class="oi"><svg class="i or"><use href="#obj"/></svg></span><span class="nm">Pisciasa_baseMesh</span><svg class="si w f"><use href="#wrenchl"/></svg><svg class="si g"><use href="#mesh"/></svg><div class="rr"><svg class="i dim"><use href="#eyeoff"/></svg><svg class="i wh2"><use href="#cam"/></svg></div></div>
      <div class="row l0"><svg class="tr"><use href="#trir"/></svg><span class="oi"><svg class="i or"><use href="#obj"/></svg></span><span class="nm">Pisciasa_baseMesh.001</span><svg class="si w f"><use href="#wrenchl"/></svg><svg class="si g"><use href="#mesh"/></svg><div class="rr"><svg class="i dim"><use href="#eyeoff"/></svg><svg class="i dim3"><use href="#camoff"/></svg></div></div>
    </div>

    <div class="props">
      <div class="ph0">
        <div class="oh-b pb1"><svg class="i"><use href="#tools"/></svg><svg class="i chev"><use href="#chevd"/></svg></div>
        <div class="oh-search ps"><svg class="i"><use href="#search"/></svg></div>
        <div class="pb2"><svg class="i chev"><use href="#chevd"/></svg></div>
      </div>
      <div class="pbody">
        <div class="ptabs">
          <span class="pt"><svg class="i wh"><use href="#tools"/></svg></span>
          <span class="pt g1 on"><svg class="i wh"><use href="#render"/></svg></span>
          <span class="pt"><svg class="i wh"><use href="#output"/></svg></span>
          <span class="pt"><svg class="i wh"><use href="#layer"/></svg></span>
          <span class="pt"><svg class="i wh"><use href="#scene"/></svg></span>
          <span class="pt"><svg class="i red"><use href="#world"/></svg></span>
          <span class="pt g2"><svg class="i wh"><use href="#colll"/></svg></span>
          <span class="pt g3"><svg class="i oo"><use href="#objsq"/></svg></span>
          <span class="pt"><svg class="i bl"><use href="#wrench"/></svg></span>
          <span class="pt"><svg class="i bl2"><use href="#partic"/></svg></span>
          <span class="pt"><svg class="i bl2"><use href="#phys"/></svg></span>
          <span class="pt"><svg class="i bl2"><use href="#constr"/></svg></span>
          <span class="pt"><svg class="i gr"><use href="#mesh"/></svg></span>
          <span class="pt"><svg class="i pk"><use href="#matball"/></svg></span>
          <span class="pt g4"><svg class="i pk2"><use href="#tex"/></svg></span>
        </div>
        <div class="pmain">
          <div class="sc-row"><svg class="i wh"><use href="#scene"/></svg><span class="en">Scene</span><svg class="i pinr"><use href="#pin"/></svg></div>
          <div class="eng"><span class="lab l-eng">渲染引擎</span><div class="dd"><span class="en">Eevee</span><svg class="i chev"><use href="#chevd"/></svg></div></div>

          <div class="pan"><div class="ph"><svg class="pc"><use href="#chevr"/></svg><span class="pn">采样</span><svg class="gripi"><use href="#grip"/></svg></div></div>
          <div class="pan"><div class="ph"><svg class="pc"><use href="#chevr"/></svg><span class="cb on"><svg><use href="#check"/></svg></span><span class="pn c">环境光遮蔽 (AO)</span><svg class="gripi"><use href="#grip"/></svg></div></div>
          <div class="pan"><div class="ph"><svg class="pc"><use href="#chevr"/></svg><span class="cb"></span><span class="pn c">辉光</span><svg class="gripi"><use href="#grip"/></svg></div></div>
          <div class="pan"><div class="ph"><svg class="pc"><use href="#chevr"/></svg><span class="pn">景深</span><svg class="gripi"><use href="#grip"/></svg></div></div>
          <div class="pan"><div class="ph"><svg class="pc"><use href="#chevr"/></svg><span class="pn">次表面散射 (SSS)</span><svg class="gripi"><use href="#grip"/></svg></div></div>
          <div class="pan"><div class="ph"><svg class="pc"><use href="#chevr"/></svg><span class="cb on"><svg><use href="#check"/></svg></span><span class="pn c">屏幕空间反射</span><svg class="gripi"><use href="#grip"/></svg></div></div>
          <div class="pan"><div class="ph"><svg class="pc"><use href="#chevr"/></svg><span class="cb"></span><span class="pn c">运动模糊</span><svg class="gripi"><use href="#grip"/></svg></div></div>
          <div class="pan"><div class="ph"><svg class="pc"><use href="#chevr"/></svg><span class="pn">体积</span><svg class="gripi"><use href="#grip"/></svg></div></div>
          <div class="pan"><div class="ph"><svg class="pc"><use href="#chevd"/></svg><span class="pn">性能</span><svg class="gripi"><use href="#grip"/></svg></div>
            <div class="pf-perf"><span class="cb on"><svg><use href="#check"/></svg></span><span class="pn c">高品质法线</span></div>
          </div>
          <div class="pan"><div class="ph"><svg class="pc"><use href="#chevd"/></svg><span class="pn">曲线</span><svg class="gripi"><use href="#grip"/></svg></div>
            <div class="pf-curve">
              <div class="fr"><span class="lab l1w">形状</span><div class="enum"><span class="on">发股</span><span>片段</span></div></div>
              <div class="fr"><span class="lab l1w">附加细分</span><div class="num w157">0</div></div>
            </div>
          </div>
          <div class="pan"><div class="ph"><svg class="pc"><use href="#chevr"/></svg><span class="pn">阴影</span><svg class="gripi"><use href="#grip"/></svg></div></div>
          <div class="pan"><div class="ph"><svg class="pc"><use href="#chevr"/></svg><span class="pn">间接光照明</span><svg class="gripi"><use href="#grip"/></svg></div></div>
          <div class="pan"><div class="ph"><svg class="pc"><use href="#chevd"/></svg><span class="pn">胶片</span><svg class="gripi"><use href="#grip"/></svg></div>
            <div class="pf-film">
              <div class="fr"><span class="lab l2w">过滤尺寸</span><div class="num w145">1.50 px</div><span class="dot"></span></div>
              <div class="fr"><span class="lab l2w"></span><span class="cb"></span><span class="pn c ft">透明</span><span class="dot auto"></span></div>
              <div class="fr"><span class="lab l2w">过扫描</span><span class="cb"></span><div class="slider"><span class="fill"></span><span class="sv">3.00%</span></div></div>
            </div>
          </div>
          <div class="pan last"><div class="ph"><svg class="pc"><use href="#chevr"/></svg><span class="cb"></span><span class="pn c">简化</span><svg class="gripi"><use href="#grip"/></svg></div></div>
        </div>
      </div>
    </div>
  </div>
</div>

<div class="status">
  <svg class="mo m1"><use href="#mouse"/></svg><span class="st1">选择</span>
  <svg class="mo m2"><use href="#mouse"/></svg><span class="st1">旋转视图</span>
  <svg class="mo m3"><use href="#mouse"/></svg><span class="st1">物体上下文菜单</span>
  <span class="stats">1 | 球体 | 顶点:705 | 面:705 | 三角面:1,406 | 物体:1/1 | 内存: 296.0 MiB | 显存: 1.2/4.0 GiB | 3.2.0</span>
</div>
<div class="footer">此视频已获得国家版权局著作权登记证书，版权所有，盗录或出售盗版属于违法行为，必究！</div>
<div class="wm">
  <svg class="wm-i" viewBox="0 0 40 40"><path fill-rule="evenodd" d="M7 1H33Q39 1 39 7V33Q39 39 33 39H7Q1 39 1 33V7Q1 1 7 1ZM6 14C12 8 18 14 21 20S30 30 35 24L35 16C30 20 27 14 24 10S12 2 6 8ZM5 20V32L15 26Z" fill="#6a6a6a"/></svg>
  <span>tafe.cc</span>
</div>
</body>
</html>
```

FILE: styles.css
```css
* { box-sizing: border-box; }
html, body { margin: 0; height: 100%; }
body {
  width: 1920px; height: 1080px; overflow: hidden; position: relative;
  display: flex; flex-direction: column;
  background: #161616; color: #bdbdbd;
  font: 11px/1 "DejaVu Sans", "Noto Sans CJK SC", sans-serif;
}
.defs { position: absolute; width: 0; height: 0; }
.i { width: 16px; height: 16px; display: block; flex: none; color: #c8c8c8; }
.chev { color: #b5b5b5; }
.en { font-size: 10.2px; }
svg { overflow: hidden; }

/* window title bar */
.titlebar { height: 23px; flex: none; background: #fff; display: flex; align-items: center; color: #222; }
.t-logo { margin-left: 3px; color: #d9772b; width: 15px; height: 15px; }
.t-text { margin-left: 5px; font: 12px "Noto Sans", "Noto Sans CJK SC", sans-serif; white-space: pre; }
.winbtns { margin-left: auto; display: flex; gap: 33px; padding-right: 13px; align-items: center; }
.wb { width: 12px; height: 12px; display: block; }

/* top bar */
.topbar { height: 27px; flex: none; background: #181818; display: flex; align-items: center; position: relative; }
.logo-box { width: 28px; padding-left: 10px; }
.mi { width: 37px; text-align: center; color: #a9a9a9; margin-top: -1px; }
.wtabs { margin-left: 16px; width: 825px; display: flex; height: 24px; align-self: flex-end; }
.wt { padding: 0 9.7px; display: flex; align-items: center; color: #8a8a8a; white-space: nowrap; font-size: 10.2px; }
.wt.on { background: #2e2e2e; color: #c8c8c8; border-radius: 3px 3px 0 0; }
.wt.plus { font-size: 15px; padding: 0 0 0 5px; color: #9a9a9a; }
.pill {
  margin-left: 6px; width: 170px; height: 18px; background: #4c4c4c; border-radius: 3px;
  display: flex; align-items: center; color: #d0d0d0; margin-top: -1px;
}
.pi1 { margin-left: 4px; width: 15px; height: 15px; }
.pt1 { margin-left: 7px; }
.pchev { margin-left: 12px; }
.pt2 { margin-left: 6px; }
.pi3 { margin-left: 11px; width: 13px; height: 16px; }
.pt3 { margin-left: 8px; }
.scenes { margin-left: auto; margin-right: 12px; display: flex; align-items: center; height: 18px; margin-top: -1px; }
.sc-icon { width: 32px; height: 18px; display: flex; align-items: center; background: #242424; border-radius: 3px 0 0 3px; padding-left: 1px; }
.sc-icon .i { width: 14px; height: 14px; }
.sc-name { height: 18px; background: #1e1e1e; color: #c2c2c2; padding-left: 6px; display: flex; align-items: center; font-size: 10.2px; }
.s1 { width: 116px; }
.s2 { margin-left: 11px; }
.s3 { width: 117px; }
.sc-btn { width: 20px; height: 18px; background: #4a4a4a; display: flex; align-items: center; justify-content: center; }
.sc-btn .i { width: 14px; height: 14px; color: #ccc; }
.sc-x { width: 18px; height: 18px; background: #343434; display: flex; align-items: center; justify-content: center; border-radius: 0 3px 3px 0; }
.sc-x .i { color: #5f5f5f; width: 14px; height: 14px; }

/* work area */
.work { flex: 1; display: flex; min-height: 0; gap: 3px; }
.left { width: 1585px; display: flex; flex-direction: column; gap: 2px; flex: none; }
.right { flex: 1; display: flex; flex-direction: column; gap: 2px; min-width: 0; }

/* 3D viewport */
.viewport { flex: none; height: 823px; position: relative; overflow: hidden; background: #212121; }
.grid { position: absolute; left: 0; top: 0; display: block; }
.gl { stroke: #3b3b3b; fill: none; }
.gb { stroke: #2f5480; fill: none; }

.vh1, .vh2 { position: relative; z-index: 2; display: flex; align-items: center; }
.vh1 { height: 25px; background: #303030; padding-left: 10px; }
.vh2 { height: 25px; background: linear-gradient(rgba(46,46,46,.88), rgba(40,40,40,.7)); padding: 2px 0 0 44px; }
.box { height: 20px; display: flex; align-items: center; background: #262626; border-radius: 3px; flex: none; color: #c4c4c4; }
.box .end { margin-left: auto; }
.b-ed { width: 32px; padding-left: 2px; }
.b-mode { width: 106px; margin-left: 7px; padding: 0 2px; gap: 4px; }
.vm { width: 37px; text-align: center; color: #b8b8b8; flex: none; }
.first { margin-left: 6px; }
.b-glob { width: 74px; margin-left: 364px; padding: 0 1px; gap: 3px; }
.b-piv { width: 29px; margin-left: 8px; }
.b-piv .chev { margin-left: -2px; }
.b-snap { width: 51px; margin-left: 6px; }
.bt { width: 18px; height: 20px; display: flex; align-items: center; justify-content: center; flex: none; }
.bt .i { width: 15px; height: 15px; }
.bt.lit { background: #505050; }
.bt.lit:first-child { border-radius: 3px 0 0 3px; }
.bt.blue { background: #4772b3; }
.bt.blue .i { color: #f2f2f2; }
.whsq { width: 12px; height: 14px; background: #e8e8e8; margin-left: 5px; }
.b-snap .chev { margin-left: -1px; }
.b-prop { width: 48px; margin-left: 7px; }
.b-prop .bt { width: 18px; }
.b-vis { display: flex; align-items: center; margin-left: 391px; width: 35px; flex: none; }
.b-giz { margin-left: 0; border-radius: 3px 0 0 3px; }
.b-ov { margin-left: 12px; border-radius: 3px 0 0 3px; }
.b-xr { margin-left: 10px; }
.shad { display: flex; margin-left: 8px; flex: none; }
.shad .bt { width: 19px; }
.b-ren { display: flex; margin-left: 9px; flex: none; }
.selmodes { display: flex; height: 18px; }
.sm { width: 19px; height: 18px; background: #444; display: flex; align-items: center; justify-content: center; }
.sm .i { width: 14px; height: 14px; color: #cfcfcf; }
.sm.blue { background: #4772b3; border-radius: 3px 0 0 3px; }
.opts { margin-left: auto; margin-right: 5px; display: flex; align-items: center; gap: 1px; background: #282828; height: 20px; padding: 0 0 0 3px; color: #c4c4c4; }

/* tools */
.toolbar { position: absolute; z-index: 2; left: 8px; top: 60px; width: 41px; display: flex; flex-direction: column; }
.tg { background: #262626; border: 1px solid #2f2f2f; border-radius: 3px; }
.tg:nth-child(2) { margin-top: 7px; }
.tg:nth-child(3) { margin-top: 10px; }
.tg:nth-child(4) { margin-top: 8px; }
.tool { height: 33px; display: flex; align-items: center; justify-content: center; border-bottom: 1px solid #2e2e2e; }
.tool:last-child { border-bottom: 0; }
.tool.on { background: #4772b3; border-radius: 2px 2px 0 0; }
.ti { width: 24px; height: 24px; color: #dcdcdc; display: block; }
.info { position: absolute; z-index: 2; left: 67px; top: 59px; color: #dedede; line-height: 18px; text-shadow: 0 0 2px #000; }

/* sphere + overlays */
.sphere { position: absolute; z-index: 1; left: 627px; top: 254px; width: 362px; height: 362px; }
.pointer { position: absolute; z-index: 3; left: 947px; top: 483px; width: 13px; height: 20px; }
.gizm { position: absolute; z-index: 2; left: 1274px; top: 53px; width: 84px; height: 96px; }
.gt { font: bold 10px "DejaVu Sans", sans-serif; text-anchor: middle; fill: #1f2f40; }
.navs { position: absolute; z-index: 2; left: 1334px; top: 146px; display: flex; flex-direction: column; gap: 10px; }
.nv { width: 20px; height: 20px; color: #d6d6d6; display: block; }

.fpanel { position: absolute; z-index: 2; left: 1374px; top: 53px; width: 184px; height: 64px; background: rgba(58,58,58,.94); border-radius: 4px; padding: 0 8px; }
.fp-head { height: 25px; display: flex; align-items: center; color: #d0d0d0; margin-left: -3px; gap: 1px; }
.gripi { width: 12px; height: 6px; margin-left: auto; margin-right: -3px; color: #8a8a8a; display: block; flex: none; }
.fp-btn { margin-top: 15px; height: 18px; background: #555; border-radius: 3px; text-align: center; line-height: 18px; color: #d0d0d0; }

.vtabs { position: absolute; z-index: 1; right: 0; top: 50px; bottom: 0; width: 24px; padding: 7px 3px 0 3px; background: #202020; display: flex; flex-direction: column; gap: 5px; }
.vt {
  writing-mode: vertical-rl; transform: rotate(180deg); text-orientation: sideways;
  background: #2a2a2a; color: #c8c8c8; padding: 7.5px 0; display: flex; align-items: center;
  border-radius: 0 3px 3px 0; white-space: nowrap; line-height: 18px; width: 18px; font-size: 10.2px; flex: none;
}
.vt.c { padding: 7px 0; font-size: 11px; }
.vt.on { background: #3c3c3c; color: #e0e0e0; }
.gapb { margin-top: 5px; }

/* node editor */
.nodes { flex: none; height: 144px; background: #1d1d1d; position: relative; overflow: hidden; }
.nh { height: 29px; display: flex; align-items: center; padding: 1px 0 0 9px; }
.nh .box { background: #232323; border: 1px solid #2b2b2b; }
.n-ed { width: 31px; }
.n-mode { width: 83px; margin-left: 6px; padding: 0 1px; gap: 5px; }
.nfirst { margin-left: 5px; }
.n-slot { width: 79px; margin-left: 372px; padding-left: 4px; }
.n-mat { width: 30px; margin-left: 6px; border-radius: 3px 0 0 3px !important; }
.n-new { width: 121px; height: 20px; background: #505050; border-radius: 0 3px 3px 0; display: flex; align-items: center; color: #d0d0d0; flex: none; }
.plusic { margin-left: 4px; }
.n-new span { margin-left: 33px; }
.n-pin { margin-left: 5px; }
.n-a { margin-left: 549px; background: #2a2a2a; border-radius: 3px; }
.n-a .i { color: #555; }
.n-b { margin-left: 4px; width: 21px; border-radius: 3px; }
.n-c { margin-left: 6px; border-radius: 3px 0 0 3px; }
.n-arrow { position: absolute; left: -4px; top: 40px; width: 12px; height: 12px; color: #888; }
.side { position: absolute; z-index: 2; left: 1366px; top: 28px; width: 199px; height: 116px; background: #2f2f2f; padding: 0 7px 0 8px; border-radius: 4px 0 0 0; }
.side-in { background: #383838; height: 92px; border-radius: 3px; padding: 0 8px; }
.fp-head.s { color: #d6d6d6; }
.sb { display: flex; align-items: center; margin-top: 6px; gap: 12px; color: #c0c0c0; padding-left: 7px; }
.sbi { width: 24px; height: 24px; display: block; flex: none; }
.s3m { margin-top: 9px; margin-left: 1px; }
.vtabs.low { top: 28px; padding-top: 2px; }
.vtabs.low .vt.c { padding: 9px 0; }

/* outliner */
.outliner { flex: none; height: 310px; background: #282828; position: relative; overflow: hidden; }
.oh { height: 26px; display: flex; align-items: center; padding-left: 12px; }
.oh-b { height: 20px; display: flex; align-items: center; background: #262626; border-radius: 3px; flex: none; }
.oh-b .chev { margin-left: -3px; }
.b1 { width: 28px; }
.b2 { width: 28px; margin-left: 10px; }
.oh-search { width: 110px; height: 20px; margin-left: 22px; background: #1e1e1e; border-radius: 3px; display: flex; align-items: center; padding-left: 2px; flex: none; }
.b3 { width: 30px; margin-left: 58px; }
.oh-new { width: 20px; height: 20px; margin-left: 6px; background: #484848; border-radius: 3px; display: flex; align-items: center; justify-content: center; flex: none; }
.tree { position: absolute; width: 1px; background: #4b4b4b; }
.t1 { left: 30px; top: 26px; bottom: 0; }
.t2 { left: 50px; top: 46px; height: 196px; }
.t3 { left: 69px; top: 60px; height: 66px; background: repeating-linear-gradient(#444 0 3px, transparent 3px 6px); }

.row { height: 20px; display: flex; align-items: center; position: relative; }
.row:nth-child(even) { background: rgba(255,255,255,.012); }
.l0 { padding-left: 44px; }
.l1 { padding-left: 64px; }
.l2 { padding-left: 84px; }
.tr { width: 10px; height: 10px; color: #8e8e8e; flex: none; display: block; }
.oi { width: 16px; height: 16px; margin-left: 8px; display: flex; align-items: center; justify-content: center; flex: none; }
.oi.boxed { background: #4d4d4d; border-radius: 4px; width: 18px; height: 19px; margin-left: 7px; margin-right: -1px; }
.oi.hi { background: #5b79a8; border-radius: 4px; width: 19px; height: 19px; margin-left: 6px; margin-right: -1px; }
.wh { color: #e6e6e6; }
.wh2 { color: #d8d8d8; }
.or { color: #8a5f3a; }
.or2 { color: #e8934a; }
.orl { color: #b88754; }
.nm { margin-left: 7px; color: #6f6f6f; white-space: nowrap; font-size: 10px; }
.nm.cj { font-size: 10.5px; }
.nm.br { color: #b4b4b4; }
.nm.sl { color: #e9a45e; }
.si { width: 16px; height: 16px; flex: none; display: block; }
.si.w { color: #4c4c72; }
.si.g { color: #2f8a6a; margin-left: 5px; }
.si.cy { color: #45c2c9; }
.si.f { margin-left: 22px; }
.si.g.f { margin-left: 22px; }
.si.f2 { margin-left: 22px; }
.badge { position: relative; margin-left: 5px; display: block; }
.badge b { position: absolute; right: -8px; bottom: -4px; width: 11px; height: 11px; border-radius: 50%; background: #161616; color: #eee; font: bold 8px/11px "DejaVu Sans", sans-serif; text-align: center; }
.rr { margin-left: auto; padding-right: 10px; display: flex; align-items: center; gap: 5px; }
.ck { width: 12px; height: 12px; background: #d8d8d8; border-radius: 2px; display: block; color: #1a1a1a; }
.ck svg { width: 12px; height: 12px; display: block; }
.dim { color: #7c7c7c; }
.dim2 { color: #4c4c4c; }
.dim3 { color: #a8a8a8; }
.sel { background: #334a80 !important; }

/* properties */
.props { flex: 1; min-height: 0; background: #282828; overflow: hidden; display: flex; flex-direction: column; }
.ph0 { height: 26px; flex: none; display: flex; align-items: center; padding-left: 15px; }
.pb1 { width: 32px; background: transparent; }
.ps { margin-left: 67px; }
.pb2 { margin-left: auto; margin-right: 10px; width: 16px; background: #262626; }
.pbody { flex: 1; min-height: 0; display: flex; }
.ptabs { width: 35px; flex: none; background: #1d1d1d; padding-top: 8px; display: flex; flex-direction: column; align-items: stretch; }
.pt { height: 28.200px; display: flex; align-items: center; justify-content: center; flex: none; padding-right: 5px; }
.pt.on { background: #2e2e2e; border-radius: 4px 0 0 4px; }
.pt .i { width: 15px; height: 15px; }
.g1 { margin-top: 6px; }
.g2 { margin-top: 9px; }
.g3 { margin-top: 7px; }
.g4 { margin-top: 8px; }
.red { color: #a63f57; }
.oo { color: #d9975a; }
.bl { color: #6a8be0; }
.bl2 { color: #7f95b8; }
.gr { color: #35b070; }
.pk { color: #b0486a; }
.pk2 { color: #b25a7c; }

.pmain { flex: 1; min-width: 0; padding: 8px 8px 0 0; display: flex; flex-direction: column; }
.sc-row { height: 20px; flex: none; display: flex; align-items: center; padding-left: 4px; color: #c6c6c6; }
.sc-row span { margin-left: 7px; }
.pinr { margin-left: auto; color: #6c6c6c; margin-right: 2px; }
.eng { flex: none; margin-top: 17px; height: 19px; display: flex; align-items: center; }
.lab { text-align: right; color: #c2c2c2; flex: none; }
.l-eng { width: 112px; }
.dd { margin-left: 8px; width: 167px; height: 19px; background: #2c2c2c; display: flex; align-items: center; justify-content: space-between; padding-left: 9px; border-radius: 3px; color: #c8c8c8; }
.dd .chev { margin-right: -3px; }
.pan { flex: none; background: #3a3a3a; margin-top: 2px; border-radius: 3px; }
.eng + .pan { margin-top: 11px; }
.pan.last { margin-top: 3px; }
.ph { height: 25.100px; display: flex; align-items: center; padding-left: 8px; color: #c6c6c6; }
.ph .gripi { margin-right: 6px; }
.pc { width: 12px; height: 12px; color: #a8a8a8; flex: none; display: block; }
.pn { margin-left: 4px; color: #c8c8c8; white-space: nowrap; }
.pn.c { margin-left: 3px; }
.cb { width: 12px; height: 12px; margin-left: 2px; background: #555; border-radius: 2px; flex: none; display: block; color: #fff; }
.cb.on { background: #4772b3; }
.cb svg { width: 12px; height: 12px; display: block; }
.pf-perf { height: 35px; padding: 0 0 0 121px; display: flex; align-items: center; }
.pf-curve { padding: 9px 0 9px; display: flex; flex-direction: column; gap: 7px; }
.fr { height: 18px; display: flex; align-items: center; }
.l1w { width: 113px; margin-right: 10px; }
.enum { width: 157px; height: 18px; display: flex; background: #555; border-radius: 3px; overflow: hidden; color: #d4d4d4; }
.enum span { width: 50%; text-align: center; line-height: 18px; }
.enum .on { background: #4772b3; color: #e8e8e8; }
.num { height: 18px; background: #555; border-radius: 4px; text-align: center; line-height: 18px; color: #cfcfcf; flex: none; }
.w157 { width: 157px; }
.w145 { width: 145px; }
.pf-film { padding: 9px 0 8px; display: flex; flex-direction: column; gap: 5.500px; }
.l2w { width: 104px; margin-right: 9px; }
.dot { width: 4px; height: 4px; background: #d8d8d8; border-radius: 50%; margin-left: 9px; flex: none; }
.dot.auto { margin-left: 125px; }
.ft { margin-left: 4px; }
.slider { width: 124px; height: 18px; margin-left: 7px; background: #4a4a4a; border-radius: 3px; position: relative; overflow: hidden; display: flex; align-items: center; justify-content: center; }
.fill { position: absolute; left: 0; top: 0; bottom: 0; width: 34px; background: #47699e; }
.sv { color: #7c7c7c; position: relative; margin-left: 8px; }

/* status + footer */
.status { height: 21px; flex: none; background: #232323; display: flex; align-items: center; color: #7c7c7c; padding: 2px 8px 0 0; }
.mo { width: 12px; height: 18px; color: #9a9a9a; display: block; flex: none; }
.m1 { margin-left: 10px; }
.st1 { margin-left: 10px; white-space: nowrap; }
.m2 { margin-left: 236px; }
.m3 { margin-left: 211px; }
.stats { margin-left: auto; white-space: nowrap; color: #8c8c8c; font-size: 10.850px; }
.footer { height: 41px; flex: none; background: #000; color: #3e3e3e; display: flex; align-items: center; justify-content: center; font: 15px "Noto Sans CJK SC", sans-serif; padding: 9px 0 0 3px; }
.wm { position: absolute; z-index: 5; left: 10px; top: 1029px; display: flex; align-items: center; gap: 10px; color: #6a6a6a; }
.wm-i { width: 40px; height: 40px; display: block; }
.wm span { font: bold 41px/40px "Lato", sans-serif; letter-spacing: .3px; }
```
